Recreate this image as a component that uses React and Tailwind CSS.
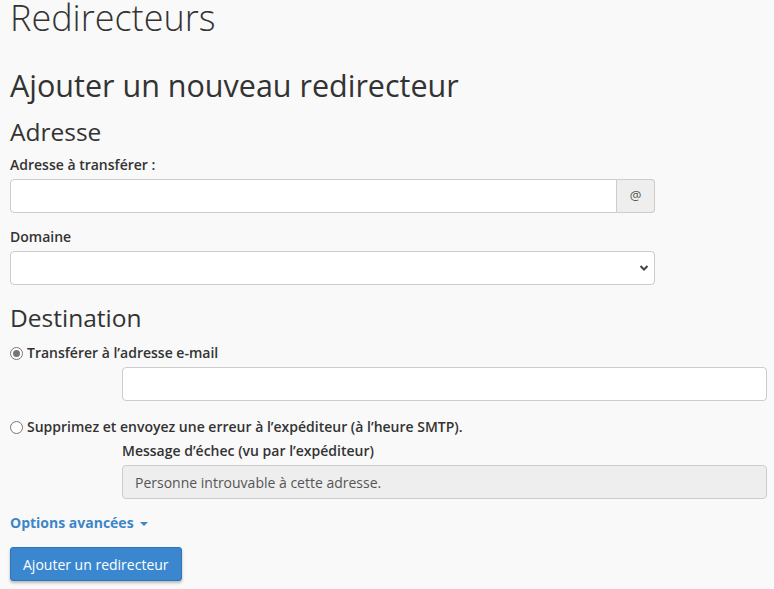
import { useState } from 'react';

const font = { fontFamily: '"Open Sans", "Liberation Sans", sans-serif' };

const Radio = ({ checked, onClick }) => (
  <span
    onClick={onClick}
    className="inline-flex items-center justify-center w-[13px] h-[13px] rounded-full border border-[#767676] bg-white shrink-0"
  >
    {checked && <span className="w-[7px] h-[7px] rounded-full bg-[#757575]" />}
  </span>
);

const App = () => {
  const [mode, setMode] = useState('forward');

  return (
    <div style={font} className="min-h-[589px] bg-[#f9f9f9] text-[#333] px-[10px] pt-px overflow-hidden">
      <h1 className="text-[36px] font-light leading-[40px] -mt-[3px]">Redirecteurs</h1>

      <h2 className="text-[30.5px] leading-[34px] mt-[30px]">Ajouter un nouveau redirecteur</h2>

      <h3 className="text-[24.5px] leading-[28px] mt-[16px]">Adresse</h3>

      <label className="block text-[14px] font-semibold leading-[20px] mt-[9px]">
        Adresse à transférer :
      </label>
      <div className="flex w-[645px] mt-[4px]">
        <input
          type="text"
          className="flex-1 h-[34px] bg-white border border-[#ccc] rounded-l-[4px] px-3 text-[14px] outline-none"
        />
        <span className="w-[38px] h-[34px] flex items-center justify-center bg-[#eee] border border-l-0 border-[#ccc] rounded-r-[4px] text-[13px] text-[#555]">
          @
        </span>
      </div>

      <label className="block text-[14px] font-semibold leading-[20px] mt-[14px]">Domaine</label>
      <div className="relative w-[645px] mt-[4px]">
        <select className="w-full h-[34px] bg-white border border-[#ccc] rounded-[4px] px-3 text-[14px] appearance-none outline-none">
          <option></option>
        </select>
        <svg
          className="absolute right-[6px] top-[13px] pointer-events-none"
          width="10"
          height="8"
          viewBox="0 0 10 8"
        >
          <path d="M1.5 2 L5 5.5 L8.5 2" stroke="#444" strokeWidth="2" fill="none" />
        </svg>
      </div>

      <h3 className="text-[24.5px] leading-[28px] mt-[19px]">Destination</h3>

      <div className="flex items-center gap-[4px] mt-[11px] text-[14px] font-semibold leading-[20px]">
        <Radio checked={mode === 'forward'} onClick={() => setMode('forward')} />
        <span>Transférer à l’adresse e-mail</span>
      </div>
      <div className="pl-[112px] mt-[4px]">
        <input
          type="text"
          className="w-[645px] h-[34px] bg-white border border-[#ccc] rounded-[4px] px-3 text-[14px] outline-none"
        />
      </div>

      <div className="flex items-center gap-[4px] mt-[16px] text-[14px] font-semibold leading-[20px]">
        <Radio checked={mode === 'fail'} onClick={() => setMode('fail')} />
        <span>Supprimez et envoyez une erreur à l’expéditeur (à l’heure SMTP).</span>
      </div>
      <div className="pl-[112px]">
        <label className="block text-[14px] font-semibold leading-[20px] mt-[4px]">
          Message d’échec (vu par l’expéditeur)
        </label>
        <div className="w-[645px] h-[34px] mt-[4px] bg-[#eee] border border-[#ccc] rounded-[4px] px-3 flex items-center text-[14px] text-[#555]">
          Personne introuvable à cette adresse.
        </div>
      </div>

      <div className="flex items-center gap-[6px] mt-[14px] text-[14px] font-bold leading-[20px] text-[#3d85c6]">
        <span>Options avancées</span>
        <span className="w-0 h-0 border-l-[4px] border-r-[4px] border-t-[4px] border-l-transparent border-r-transparent border-t-[#3d85c6] mt-[2px]" />
      </div>

      <button className="mt-[14px] h-[34px] px-[12px] bg-[#3a87cf] border border-[#2f75b8] rounded-[3px] text-white text-[14px] shadow-[0_2px_3px_rgba(0,0,0,0.25)]">
        Ajouter un redirecteur
      </button>
    </div>
  );
};

export default App;
